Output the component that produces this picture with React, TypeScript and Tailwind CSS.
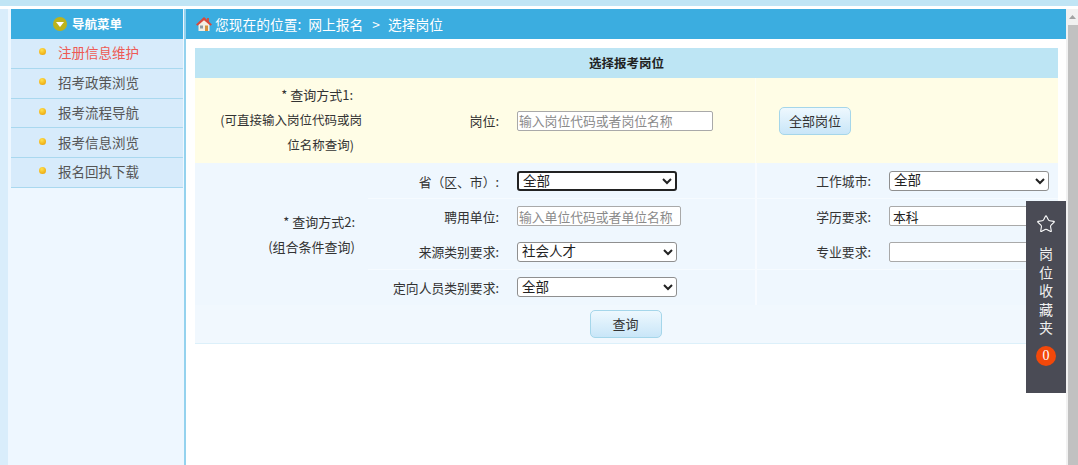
import { Star } from 'lucide-react';

const menuItems = ['注册信息维护', '招考政策浏览', '报考流程导航', '报考信息浏览', '报名回执下载'];

const selectClass =
    "h-[20px] rounded-[3px] border border-[#8f8f8f] bg-white pl-0 font-['Liberation_Sans','Noto_Sans_CJK_SC',sans-serif] text-[13.5px] leading-none text-[#222]";
const inputClass =
    'h-[20px] rounded-[2px] border border-[#a9a9a9] bg-white px-[1px] text-[12.8px] leading-none text-[#222] placeholder:text-[#8a8a8a]';
const buttonClass =
    'h-[28px] w-[72px] rounded-[5px] border border-[#a5d6ea] bg-gradient-to-b from-[#eef8fe] to-[#c9e6f8] text-[13px] text-[#333]';

function HomeIcon() {
    return (
        <svg width="16" height="16" viewBox="0 0 16 16">
            <path d="M2.5 7.5 L8 3 L13.5 7.5 V15 H2.5 Z" fill="#f4eee2" />
            <rect x="11" y="2" width="2" height="4" fill="#c9564a" />
            <path d="M0 8.5 L8 1 L16 8.5 L14.5 9.8 L8 4.2 L1.5 9.8 Z" fill="#d9483b" />
            <rect x="9" y="9.5" width="3" height="5.5" fill="#d6913c" />
            <rect x="4" y="9.5" width="3" height="3" fill="#8f9aa3" />
        </svg>
    );
}

function NavIcon() {
    return (
        <span className="flex h-[14px] w-[14px] items-center justify-center rounded-full bg-[#bcb31c]">
            <svg width="8" height="5" viewBox="0 0 8 5">
                <path d="M0 0 H8 L4 5 Z" fill="#fff" />
            </svg>
        </span>
    );
}

function Label({ children, divider }: { children: React.ReactNode; divider?: boolean }) {
    return (
        <div
            className={`flex items-center justify-end bg-[#eff7fe] pr-[9px] text-[12.8px] text-[#333] ${
                divider ? 'border-l-2 border-[#f8fbff]' : ''
            }`}
        >
            {children}
        </div>
    );
}

function Field({ children }: { children: React.ReactNode }) {
    return <div className="flex items-center bg-[#eff7fe] pl-[9px]">{children}</div>;
}

export default function App() {
    return (
        <div className="relative flex h-[465px] w-[1078px] flex-col overflow-hidden bg-white font-['Noto_Sans_CJK_SC','Liberation_Sans',sans-serif]">
            <div className="h-[6px] shrink-0 bg-[#c0e5f5]" />
            <div className="h-[3px] shrink-0 bg-white" />
            <div className="flex min-h-0 flex-1">
                {/* Left menu */}
                <div className="w-[8px] shrink-0 bg-[#d9edfb]" />
                <div className="w-[3px] shrink-0 bg-[#eef7ff]" />
                <div className="w-[172px] shrink-0 bg-[#eef7ff]">
                    <div className="flex h-[30px] items-center gap-[5px] bg-[#3badE0] pl-[42px] text-[12.5px] font-bold text-white">
                        <NavIcon />
                        <span>导航菜单</span>
                    </div>
                    {menuItems.map((item, i) => (
                        <div
                            key={item}
                            className="flex h-[29.75px] items-center border-b border-[#a9d8ef] bg-[#d7ebfb] pb-[2px] pl-[28px]"
                        >
                            <span className="-mt-[1px] h-[7px] w-[7px] rounded-full bg-[radial-gradient(circle_at_40%_30%,#ffe14d,#e89a00)]" />
                            <span className={`ml-[12px] text-[13.5px] ${i === 0 ? 'text-[#ee5a54]' : 'text-[#555]'}`}>{item}</span>
                        </div>
                    ))}
                </div>
                <div className="w-[1px] shrink-0 bg-[#eef7ff]" />
                <div className="w-[2px] shrink-0 bg-[#94d2ee]" />

                {/* Main */}
                <div className="flex w-[880px] shrink-0 flex-col">
                    <div className="flex h-[30px] shrink-0 items-center bg-[#3badE0] pl-[10px] text-[13.75px] text-white">
                        <HomeIcon />
                        <span className="ml-[3px]">您现在的位置:</span>
                        <span className="ml-[7px]">网上报名</span>
                        <span className="ml-[9px]">&gt;</span>
                        <span className="ml-[8px]">选择岗位</span>
                    </div>
                    <div className="ml-[9px] mt-[9px] w-[863px]">
                        <div className="flex h-[30px] items-center justify-center bg-[#bde5f4] text-[12.5px] font-bold text-[#222]">
                            选择报考岗位
                        </div>

                        {/* Query mode 1 */}
                        <div className="grid h-[85px] grid-cols-[173px_140px_247px_303px] bg-[#fffde6] text-[13px] text-[#333]">
                            <div className="-mt-[2px] flex flex-col items-end justify-center whitespace-nowrap pr-[6px] text-right leading-[25px]">
                                <div className="pr-[9px]">* 查询方式1:</div>
                                <div className="text-[12.5px]">(可直接输入岗位代码或岗</div>
                                <div className="pr-[8px] text-[12.5px]">位名称查询)</div>
                            </div>
                            <div className="flex items-center justify-end pr-[9px]">岗位:</div>
                            <div className="flex items-center pl-[9px]">
                                <input className={`${inputClass} w-[196px]`} placeholder="输入岗位代码或者岗位名称" />
                            </div>
                            <div className="flex items-center border-l border-[#fffef2] pl-[23px]">
                                <button className={buttonClass}>全部岗位</button>
                            </div>
                        </div>

                        {/* Query mode 2 */}
                        <div className="grid grid-cols-[173px_140px_247px_125px_178px] grid-rows-[35px_35px_35px_35px] gap-y-[0.67px] bg-[#f6fbff]">
                            <div className="row-span-4 flex flex-col items-end justify-center bg-[#eff7fe] pr-[13px] text-[13px] leading-[25px] text-[#333]">
                                <div>* 查询方式2:</div>
                                <div>(组合条件查询)</div>
                            </div>

                            <Label>
                                <span className="mt-[2px]">省（区、市）:</span>
                            </Label>
                            <Field>
                                <select className="h-[20px] w-[160px] rounded-[3px] border-2 border-[#222] bg-white pl-0 font-['Liberation_Sans','Noto_Sans_CJK_SC',sans-serif] text-[13.5px] leading-none text-[#222]">
                                    <option>全部</option>
                                </select>
                            </Field>
                            <Label divider>工作城市:</Label>
                            <Field>
                                <select className={`${selectClass} w-[160px]`}>
                                    <option>全部</option>
                                </select>
                            </Field>

                            <Label>聘用单位:</Label>
                            <Field>
                                <input className={`${inputClass} w-[164px]`} placeholder="输入单位代码或者单位名称" />
                            </Field>
                            <Label divider>学历要求:</Label>
                            <Field>
                                <input className={`${inputClass} w-[160px] pl-[3px]`} defaultValue="本科" />
                            </Field>

                            <Label>来源类别要求:</Label>
                            <Field>
                                <select className={`${selectClass} w-[160px]`}>
                                    <option>社会人才</option>
                                </select>
                            </Field>
                            <Label divider>专业要求:</Label>
                            <Field>
                                <input className={`${inputClass} w-[160px]`} />
                            </Field>

                            <Label>定向人员类别要求:</Label>
                            <Field>
                                <select className={`${selectClass} w-[160px]`}>
                                    <option>全部</option>
                                </select>
                            </Field>
                            <div className="col-span-2 border-l-2 border-[#f8fbff] bg-[#eff7fe]" />
                        </div>

                        <div className="flex h-[39.5px] items-center justify-center border-b border-[#dcf0fa] bg-[#f1f8fe] pr-[2px]">
                            <button className={buttonClass}>查询</button>
                        </div>
                    </div>
                </div>

                {/* Scrollbar */}
                <div className="flex w-[12px] shrink-0 flex-col bg-[#f1f1f1]">
                    <div className="flex h-[16px] items-center justify-center">
                        <svg width="7" height="4" viewBox="0 0 7 4">
                            <path d="M0 4 L3.5 0 L7 4 Z" fill="#a3a3a3" />
                        </svg>
                    </div>
                    <div className="ml-[2px] flex-1 bg-[#c1c1c1]" />
                </div>
            </div>

            {/* Favourites tab */}
            <div className="absolute left-[1026px] top-[201px] flex h-[192px] w-[40px] flex-col items-center bg-[#4a4b55] pt-[13px] text-white">
                <Star size={20} strokeWidth={1.3} />
                <div className="mt-[10px] flex flex-col items-center text-[14px] leading-[18.5px] text-[#f0f0f0]">
                    <span>岗</span>
                    <span>位</span>
                    <span>收</span>
                    <span>藏</span>
                    <span>夹</span>
                </div>
                <span className="mt-[9px] flex h-[20px] w-[20px] items-center justify-center rounded-full bg-[#f2480a] font-['Liberation_Serif',serif] text-[14px] leading-none">
                    0
                </span>
            </div>
        </div>
    );
}
